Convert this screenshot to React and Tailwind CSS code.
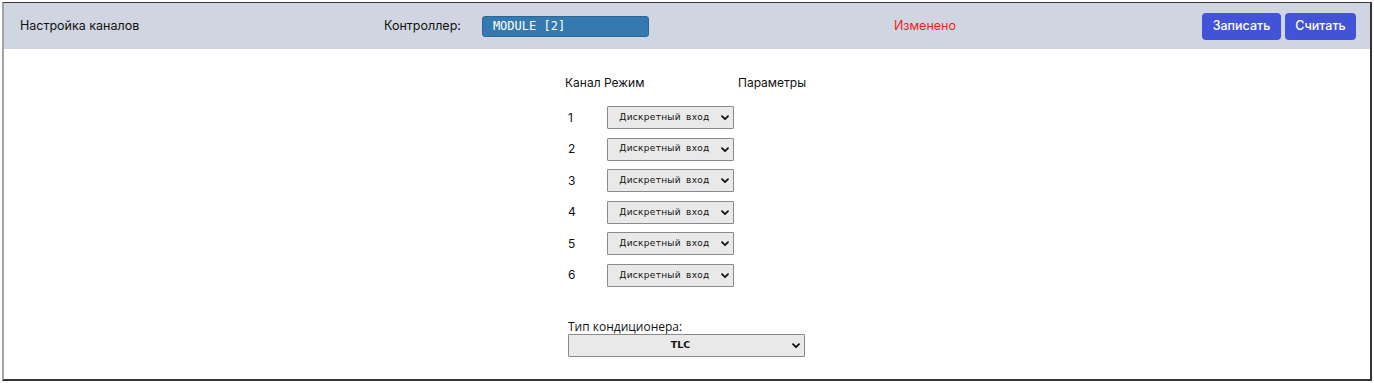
import React from "react";

function Chevron({ className }) {
  return (
    <svg className={className} width="8" height="6" viewBox="0 0 8 6" fill="none">
      <path d="M1 1.2 L4 4.2 L7 1.2" stroke="#111" strokeWidth="1.8" strokeLinecap="round" strokeLinejoin="round" />
    </svg>
  );
}

function FakeSelect({ value, options, widthClass, textClass }) {
  return (
    <div className={`relative ${widthClass} h-[23px]`}>
      <select
        defaultValue={value}
        className={`appearance-none w-full h-full bg-[#e9e9e9] border border-[#8a8a8a] rounded-[1px] pr-[20px] pl-[8px] text-center [text-align-last:center] text-[#111] outline-none ${textClass}`}
      >
        {options.map((o) => (
          <option key={o}>{o}</option>
        ))}
      </select>
      <Chevron className="pointer-events-none absolute right-[5px] top-[9px]" />
    </div>
  );
}

export default function App() {
  const rows = [1, 2, 3, 4, 5, 6];
  const modes = ["Дискретный вход", "Аналоговый вход", "Выход"];
  return (
    <div className="w-[1374px] h-[383px] bg-white p-[2px] font-['Inter','Liberation_Sans',sans-serif]">
      <div className="w-full h-full border-t border-t-[#3a3a3a] border-l-2 border-l-[#a3a3a3] border-r-2 border-r-[#333] border-b-2 border-b-[#333] flex flex-col">
        <div className="h-[46px] bg-[#d0d6e1] flex items-center pl-[16px] pr-[14px] text-[12.5px] text-[#111]">
          <div className="w-[364px]">Настройка каналов</div>
          <div>Контроллер:</div>
          <div className="ml-[21px] w-[167px] h-[21px] bg-[#3579b1] border border-[#2c6798] rounded-[3px] flex items-center pl-[10px] text-white text-[12px] font-['DejaVu_Sans_Mono',monospace]">
            MODULE [2]
          </div>
          <div className="ml-[245px] text-[#f01e1e]">Изменено</div>
          <div className="flex-1" />
          <div className="flex gap-[4px]">
            <button className="w-[79px] h-[27px] rounded-[4px] bg-[#4353d7] text-white text-[12.5px] font-medium">Записать</button>
            <button className="w-[71px] h-[27px] rounded-[4px] bg-[#4353d7] text-white text-[12.5px] font-medium">Считать</button>
          </div>
        </div>
        <div className="flex-1 flex justify-center">
          <div className="w-[240px] ml-[-4px] pt-[25px] text-[12px] text-[#111]">
            <div className="grid grid-cols-[39px_134px_67px] h-[16px] items-center">
              <div>Канал</div>
              <div>Режим</div>
              <div>Параметры</div>
            </div>
            <div className="mt-[16px] flex flex-col gap-y-[8.6px]">
              {rows.map((n) => (
                <div key={n} className="grid grid-cols-[39px_134px_67px] items-center h-[23px]">
                  <div className="pl-[3px] text-[12px]">{n}</div>
                  <div className="pl-[3px]">
                    <FakeSelect
                      value="Дискретный вход"
                      options={modes}
                      widthClass="w-[127px]"
                      textClass="text-[9px] font-['DejaVu_Sans',sans-serif] tracking-[0.3px] [word-spacing:2px]"
                    />
                  </div>
                  <div />
                </div>
              ))}
            </div>
            <div className="mt-[33px] pl-[3px]">
              <div className="text-[12px] leading-[14px] font-['Open_Sans','Noto_Sans',sans-serif]">Тип кондиционера:</div>
              <div>
                <FakeSelect
                  value="TLC"
                  options={["TLC", "Другой"]}
                  widthClass="w-[237px]"
                  textClass="text-[9.5px] font-bold font-['DejaVu_Sans',sans-serif]"
                />
              </div>
            </div>
          </div>
        </div>
      </div>
    </div>
  );
}
